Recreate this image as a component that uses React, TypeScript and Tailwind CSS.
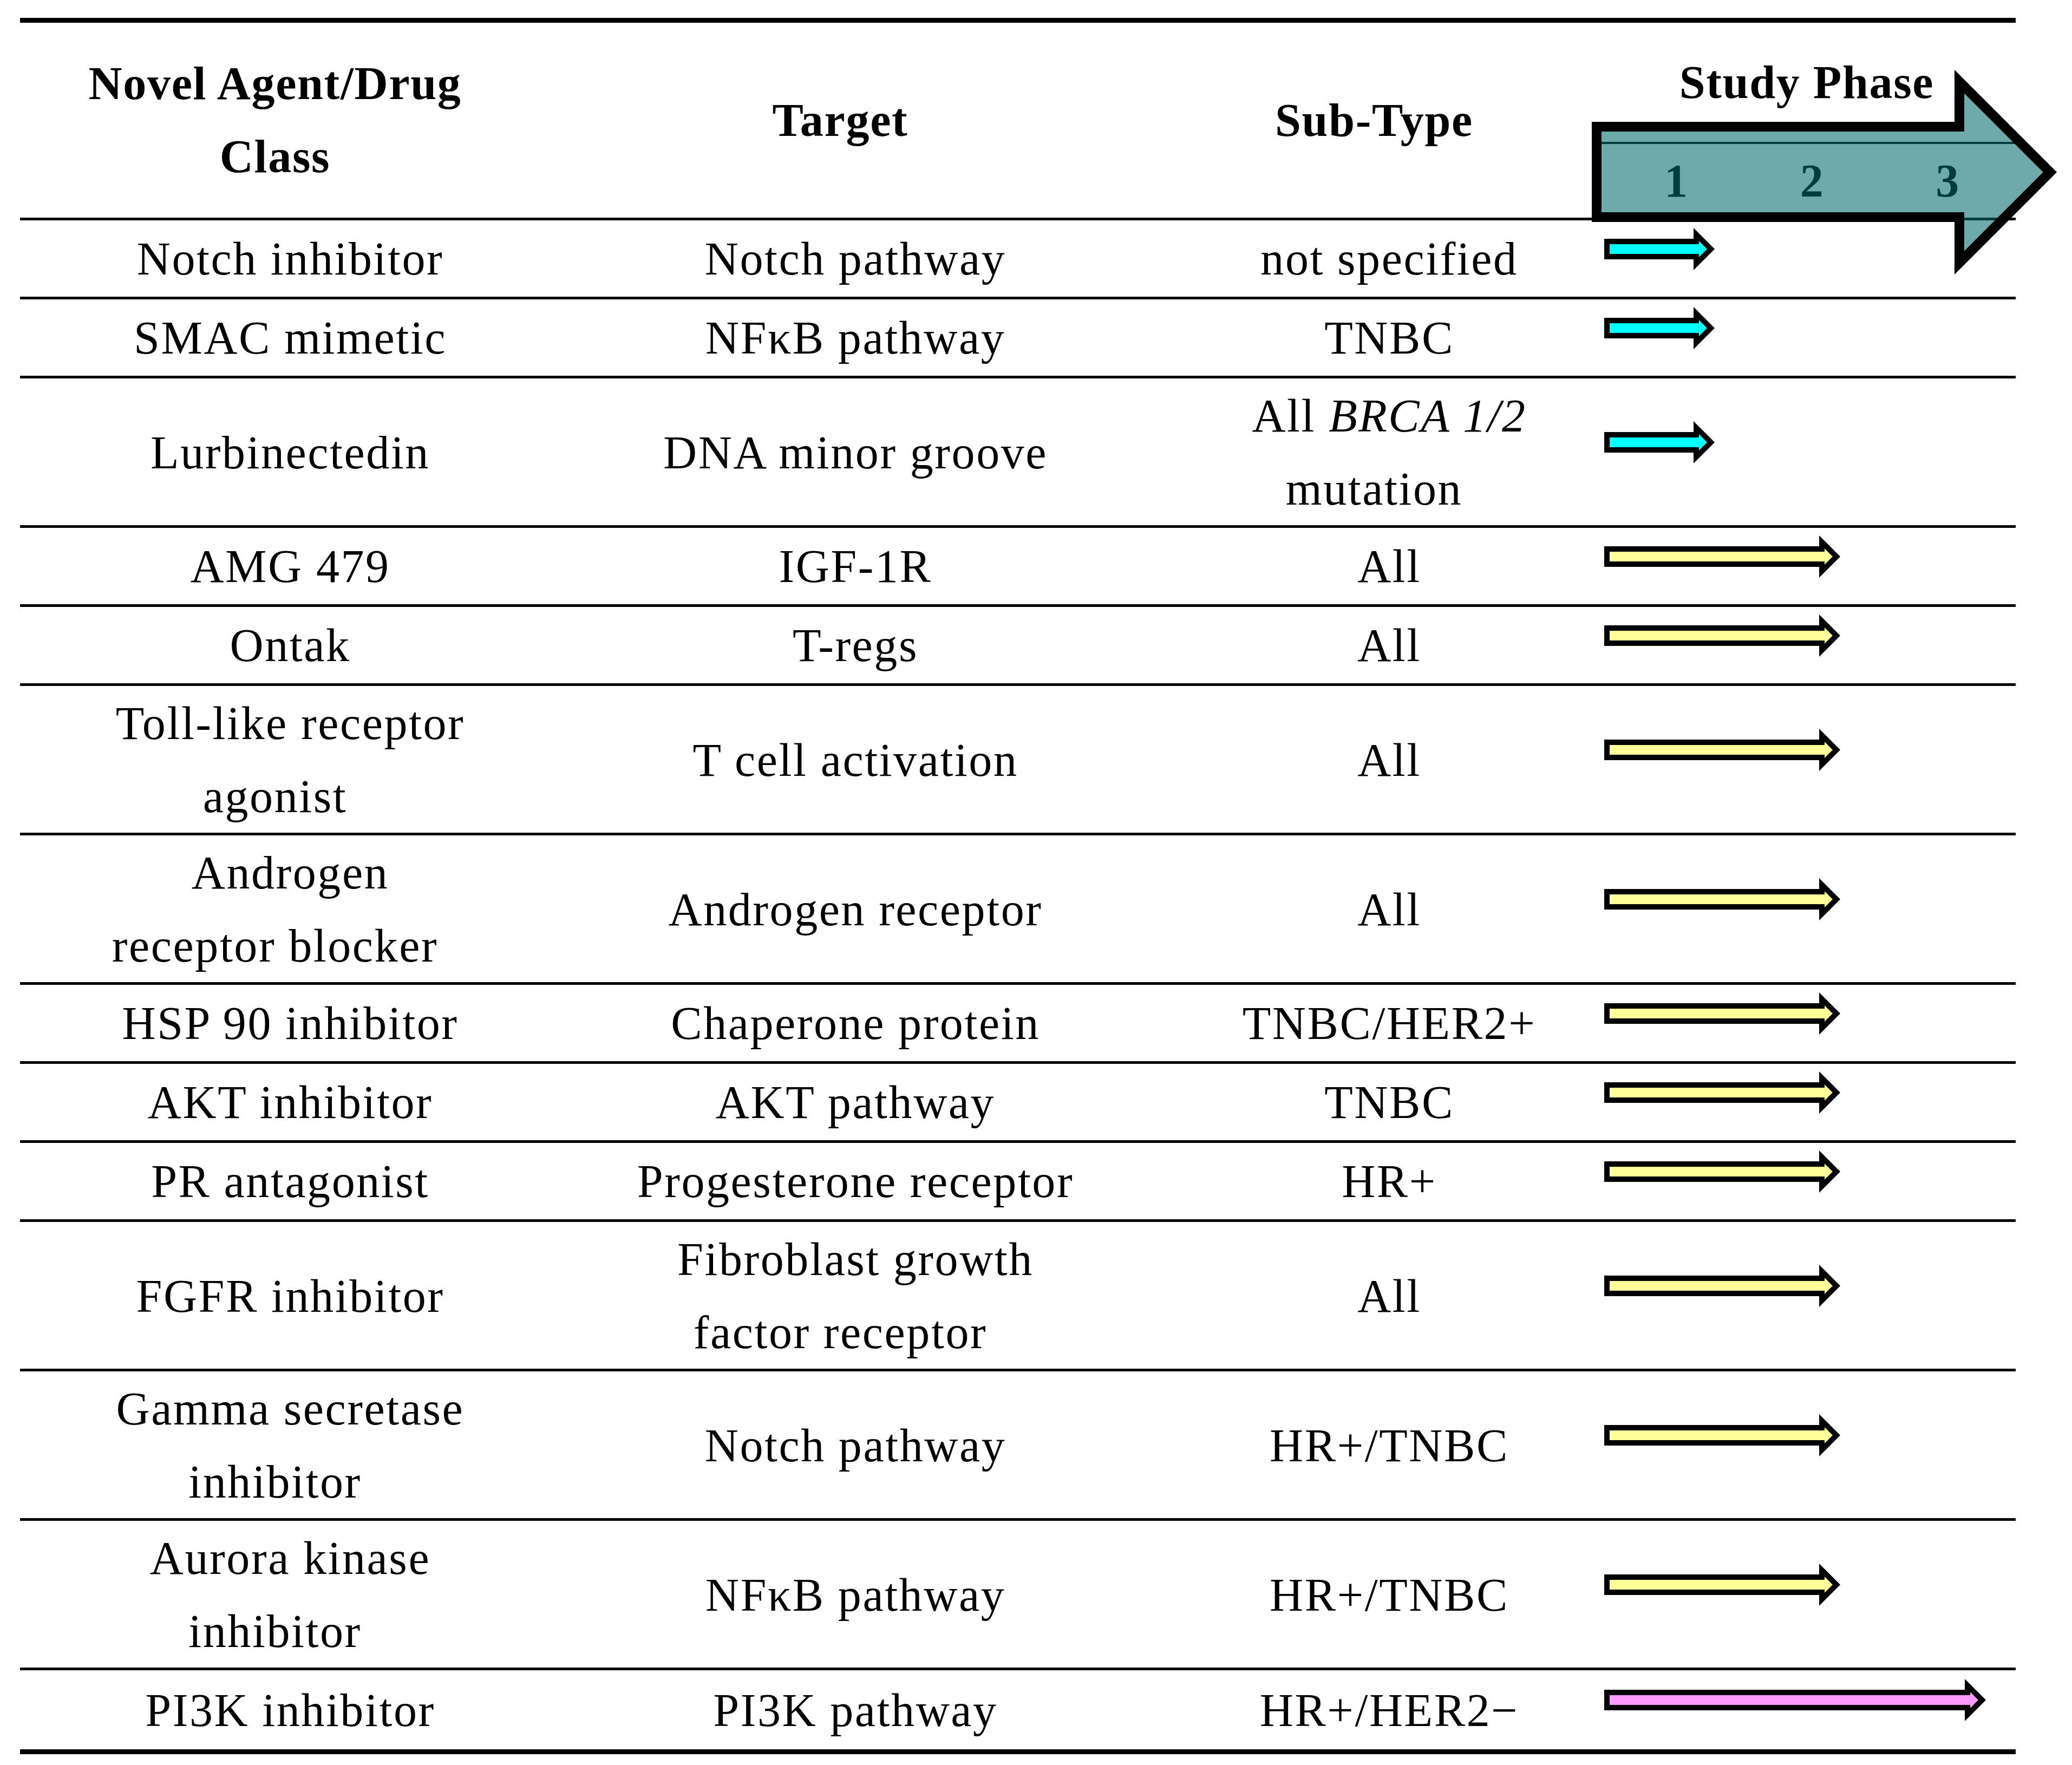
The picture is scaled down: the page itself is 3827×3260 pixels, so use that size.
import type { ReactNode } from "react";

type Row = {
  agent: ReactNode[];
  target: ReactNode[];
  subtype: ReactNode[];
  arrow: "cyan" | "yellow" | "pink";
};

const ARROWS = {
  cyan: { length: 204, fill: "#00ffff" },
  yellow: { length: 436, fill: "#ffff99" },
  pink: { length: 705, fill: "#ff99ff" },
};

const ROWS: Row[] = [
  { agent: ["Notch inhibitor"], target: ["Notch pathway"], subtype: ["not specified"], arrow: "cyan" },
  { agent: ["SMAC mimetic"], target: ["NFκB pathway"], subtype: ["TNBC"], arrow: "cyan" },
  {
    agent: ["Lurbinectedin"],
    target: ["DNA minor groove"],
    subtype: [<>All <i>BRCA 1/2</i></>, "mutation"],
    arrow: "cyan",
  },
  { agent: ["AMG 479"], target: ["IGF-1R"], subtype: ["All"], arrow: "yellow" },
  { agent: ["Ontak"], target: ["T-regs"], subtype: ["All"], arrow: "yellow" },
  { agent: ["Toll-like receptor", "agonist"], target: ["T cell activation"], subtype: ["All"], arrow: "yellow" },
  { agent: ["Androgen", "receptor blocker"], target: ["Androgen receptor"], subtype: ["All"], arrow: "yellow" },
  { agent: ["HSP 90 inhibitor"], target: ["Chaperone protein"], subtype: ["TNBC/HER2+"], arrow: "yellow" },
  { agent: ["AKT inhibitor"], target: ["AKT pathway"], subtype: ["TNBC"], arrow: "yellow" },
  { agent: ["PR antagonist"], target: ["Progesterone receptor"], subtype: ["HR+"], arrow: "yellow" },
  { agent: ["FGFR inhibitor"], target: ["Fibroblast growth", "factor receptor"], subtype: ["All"], arrow: "yellow" },
  { agent: ["Gamma secretase", "inhibitor"], target: ["Notch pathway"], subtype: ["HR+/TNBC"], arrow: "yellow" },
  { agent: ["Aurora kinase", "inhibitor"], target: ["NFκB pathway"], subtype: ["HR+/TNBC"], arrow: "yellow" },
  { agent: ["PI3K inhibitor"], target: ["PI3K pathway"], subtype: ["HR+/HER2−"], arrow: "pink" },
];

// block arrow with a thick black outline, head at 45°
const PhaseArrow = ({ kind }: { kind: Row["arrow"] }) => {
  const { length, fill } = ARROWS[kind];
  const hb = length - 39;
  const pts = `5,25 ${hb + 5},25 ${hb + 5},12.07 ${hb + 31.93},39 ${hb + 5},65.93 ${hb + 5},53 5,53`;
  return (
    <svg width={length} height={78} viewBox={`0 0 ${length} 78`} className="mb-[36px] ml-[12px] block">
      <polygon points={pts} fill={fill} stroke="#000" strokeWidth={10} strokeLinejoin="miter" strokeMiterlimit={10} />
    </svg>
  );
};

const Cell = ({ lines }: { lines: ReactNode[] }) => (
  <div className="flex flex-col justify-center pt-[2px]">
    <p className="text-center indent-[56px] whitespace-nowrap">
      {lines.map((l, i) => (
        <span key={i}>
          {i > 0 && <br />}
          {l}
        </span>
      ))}
    </p>
  </div>
);

const COLS = "grid grid-cols-[942px_1146px_826px_772px]";

export default function App() {
  return (
    <div className="relative w-[3827px] h-[3260px] bg-white pt-[33px] pl-[37px] text-black font-['Liberation_Serif',serif] text-[86px] leading-[135px]">
      <div className="w-[3686px] border-t-[9px] border-b-[9px] border-black">
        {/* header */}
        <div className={`${COLS} h-[365px] border-b-[5px] border-black font-bold tracking-[0.02em]`}>
          <div className="flex flex-col justify-center text-center">
            <p>
              Novel Agent/Drug
              <br />
              Class
            </p>
          </div>
          <div className="flex items-center justify-center">Target</div>
          <div className="flex items-center justify-center">Sub-Type</div>
          <div className="flex flex-col">
            <div className="h-[224px] border-b-[4px] border-black flex items-center justify-center">Study Phase</div>
            <div className="flex-1 grid grid-cols-3 pl-[20px] text-center items-center">
              <span>1</span>
              <span>2</span>
              <span>3</span>
            </div>
          </div>
        </div>

        {ROWS.map((r, i) => {
          const tall = Math.max(r.agent.length, r.target.length, r.subtype.length) > 1;
          const last = i === ROWS.length - 1;
          return (
            <div
              key={i}
              className={`${COLS} tracking-[0.03em] ${tall ? "h-[276px]" : "h-[146px]"} ${last ? "h-[141px]" : "border-b-[5px] border-black"}`}
            >
              <Cell lines={r.agent} />
              <Cell lines={r.target} />
              <Cell lines={r.subtype} />
              <div className="flex items-center">
                <PhaseArrow kind={r.arrow} />
              </div>
            </div>
          );
        })}
      </div>

      {/* big translucent "Study Phase" arrow laid over the header */}
      <svg
        className="absolute left-[2930px] top-[120px] pointer-events-none"
        width={880}
        height={400}
        viewBox="0 0 880 400"
      >
        <polygon
          points="19,114 689,114 689,30.7 856.3,198 689,365.3 689,281 19,281"
          fill="rgb(0,105,105)"
          fillOpacity={0.57}
          stroke="#000"
          strokeWidth={18}
          strokeLinejoin="miter"
          strokeMiterlimit={10}
        />
      </svg>
    </div>
  );
}
